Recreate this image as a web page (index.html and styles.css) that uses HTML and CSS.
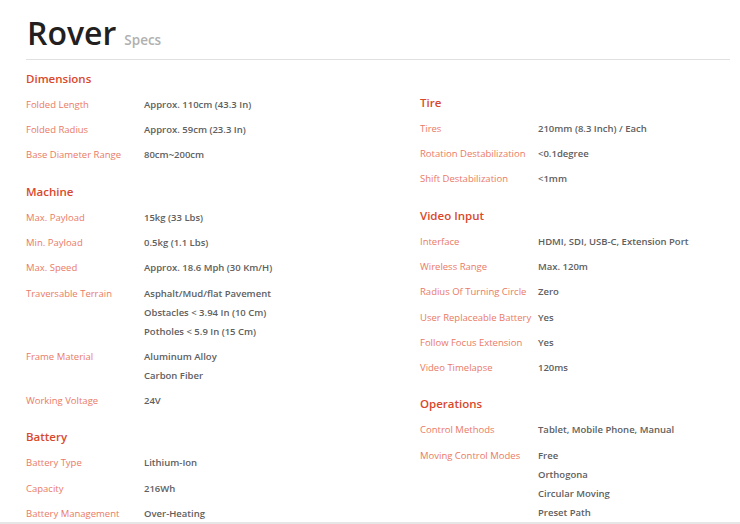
FILE: index.html
```html
<!DOCTYPE html>
<html>
<head>
<meta charset="utf-8">
<link rel="stylesheet" href="styles.css">
</head>
<body>
<div class="page">
  <header class="head">
    <h1 class="title">Rover</h1><span class="sub">Specs</span>
  </header>
  <div class="cols">
    <div class="col col-left">
      <section class="sec">
        <h2 class="sec-title">Dimensions</h2>
        <div class="row"><div class="lbl">Folded Length</div><div class="val"><div>Approx. 110cm (43.3 In)</div></div></div>
        <div class="row"><div class="lbl">Folded Radius</div><div class="val"><div>Approx. 59cm (23.3 In)</div></div></div>
        <div class="row"><div class="lbl">Base Diameter Range</div><div class="val"><div>80cm~200cm</div></div></div>
      </section>
      <section class="sec">
        <h2 class="sec-title">Machine</h2>
        <div class="row"><div class="lbl">Max. Payload</div><div class="val"><div>15kg (33 Lbs)</div></div></div>
        <div class="row"><div class="lbl">Min. Payload</div><div class="val"><div>0.5kg (1.1 Lbs)</div></div></div>
        <div class="row"><div class="lbl">Max. Speed</div><div class="val"><div>Approx. 18.6 Mph (30 Km/H)</div></div></div>
        <div class="row"><div class="lbl">Traversable Terrain</div><div class="val"><div>Asphalt/Mud/flat Pavement</div><div>Obstacles &lt; 3.94 In (10 Cm)</div><div>Potholes &lt; 5.9 In (15 Cm)</div></div></div>
        <div class="row"><div class="lbl">Frame Material</div><div class="val"><div>Aluminum Alloy</div><div>Carbon Fiber</div></div></div>
        <div class="row"><div class="lbl">Working Voltage</div><div class="val"><div>24V</div></div></div>
      </section>
      <section class="sec">
        <h2 class="sec-title">Battery</h2>
        <div class="row"><div class="lbl">Battery Type</div><div class="val"><div>Lithium-Ion</div></div></div>
        <div class="row"><div class="lbl">Capacity</div><div class="val"><div>216Wh</div></div></div>
        <div class="row"><div class="lbl">Battery Management</div><div class="val"><div>Over-Heating</div></div></div>
      </section>
    </div>
    <div class="col col-right">
      <section class="sec">
        <h2 class="sec-title">Tire</h2>
        <div class="row"><div class="lbl">Tires</div><div class="val"><div>210mm (8.3 Inch) / Each</div></div></div>
        <div class="row"><div class="lbl">Rotation Destabilization</div><div class="val"><div>&lt;0.1degree</div></div></div>
        <div class="row"><div class="lbl">Shift Destabilization</div><div class="val"><div>&lt;1mm</div></div></div>
      </section>
      <section class="sec">
        <h2 class="sec-title">Video Input</h2>
        <div class="row"><div class="lbl">Interface</div><div class="val"><div>HDMI, SDI, USB-C, Extension Port</div></div></div>
        <div class="row"><div class="lbl">Wireless Range</div><div class="val"><div>Max. 120m</div></div></div>
        <div class="row"><div class="lbl">Radius Of Turning Circle</div><div class="val"><div>Zero</div></div></div>
        <div class="row"><div class="lbl">User Replaceable Battery</div><div class="val"><div>Yes</div></div></div>
        <div class="row"><div class="lbl">Follow Focus Extension</div><div class="val"><div>Yes</div></div></div>
        <div class="row"><div class="lbl">Video Timelapse</div><div class="val"><div>120ms</div></div></div>
      </section>
      <section class="sec">
        <h2 class="sec-title">Operations</h2>
        <div class="row"><div class="lbl">Control Methods</div><div class="val"><div>Tablet, Mobile Phone, Manual</div></div></div>
        <div class="row"><div class="lbl">Moving Control Modes</div><div class="val"><div>Free</div><div>Orthogona</div><div>Circular Moving</div><div>Preset Path</div></div></div>
      </section>
    </div>
  </div>
</div>
<div class="bottom-edge"></div>
</body>
</html>
```
FILE: styles.css
```css
html, body {
  margin: 0;
  padding: 0;
  background: #fff;
  overflow: hidden;
}
body {
  font-family: "Open Sans", "Liberation Sans", sans-serif;
  color: #555;
}
.page {
  padding: 0 10px 0 26px;
}
.head {
  display: flex;
  align-items: baseline;
  gap: 8px;
  padding-top: 13px;
  padding-bottom: 6px;
  border-bottom: 1px solid #e0e0e0;
}
.title {
  margin: 0;
  font-size: 32px;
  line-height: 40px;
  font-weight: 600;
  color: #231f20;
  padding-left: 1px;
}
.sub {
  font-size: 13.5px;
  color: #b0b0b0;
  font-weight: 600;
}
.cols {
  display: grid;
  grid-template-columns: 394px 1fr;
}
.col-left {
  padding-top: 9px;
}
.col-right {
  padding-top: 33px;
}
.sec + .sec {
  margin-top: 14.4px;
}
.sec-title {
  margin: 0 0 3px;
  font-size: 11.5px;
  line-height: 20px;
  font-weight: 600;
  color: #d9482b;
}
.row {
  display: grid;
  grid-template-columns: 118px 1fr;
  padding: 3px 0 3.2px;
  font-size: 9.5px;
  line-height: 19px;
}
.lbl {
  color: #ea7a65;
}
.val {
  color: #606060;
  font-weight: 600;
}
.bottom-edge {
  position: fixed;
  left: 0;
  right: 0;
  bottom: 0;
  height: 2px;
  background: #e6e6e6;
}
```
